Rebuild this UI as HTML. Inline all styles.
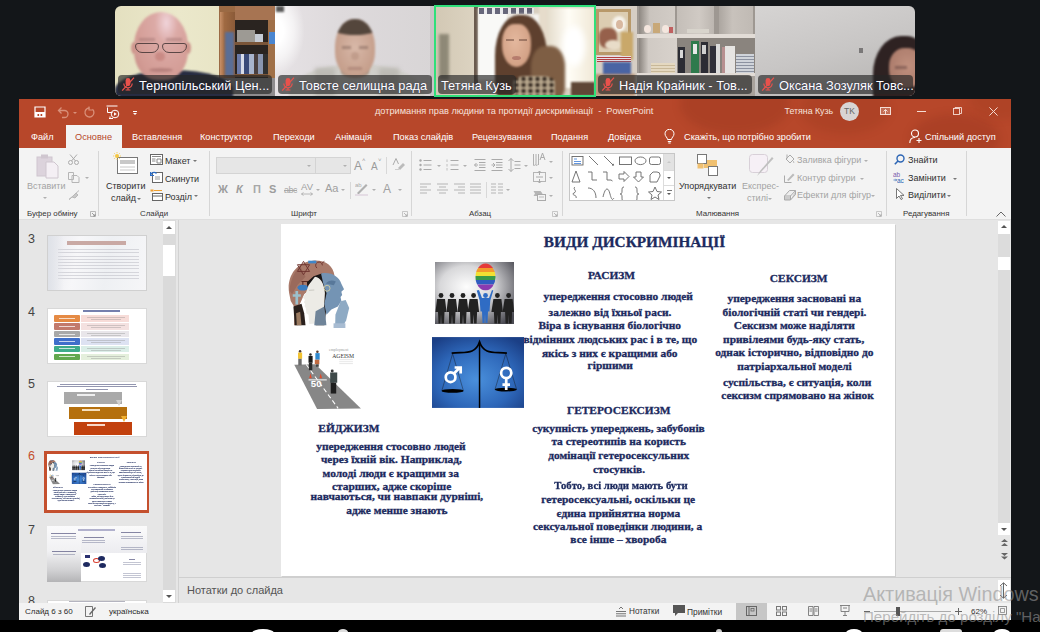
<!DOCTYPE html>
<html><head><meta charset="utf-8">
<style>
*{margin:0;padding:0;box-sizing:border-box}
html,body{width:1040px;height:632px;overflow:hidden;background:#131619;font-family:"Liberation Sans",sans-serif;position:relative}
.a{position:absolute}
.t{position:absolute;white-space:nowrap;line-height:1}
.blur{filter:blur(2px)}
.tile{position:absolute;top:6px;height:90px;width:160px;overflow:hidden}
.lbl{position:absolute;top:74.5px;height:19px;border-radius:4px;background:rgba(38,38,38,.66)}
.lt{position:absolute;top:79.5px;color:#fff;font-size:12.8px;white-space:nowrap;line-height:1;text-shadow:0 0 1px rgba(0,0,80,.6)}
.mic{position:absolute;top:77px;width:14px;height:14px}
/* window */
.tab{position:absolute;top:133px;font-size:9.2px;color:#fff;white-space:nowrap;line-height:1}
.rt{position:absolute;font-size:9px;color:#303030;white-space:nowrap;line-height:1}
.rd{position:absolute;font-size:9px;color:#a3a3a3;white-space:nowrap;line-height:1}
.gl{position:absolute;top:210px;font-size:7.9px;color:#333;white-space:nowrap;line-height:1}
.sep{position:absolute;top:151px;width:1px;height:65px;background:#d6d6d6}
.dd{position:absolute;width:0;height:0;border-left:2px solid transparent;border-right:2px solid transparent;border-top:2px solid #777}
.ddg{position:absolute;width:0;height:0;border-left:2px solid transparent;border-right:2px solid transparent;border-top:2px solid #b0b0b0}
.st{position:absolute;font-family:"Liberation Serif",serif;font-weight:bold;color:#1c2a5e;white-space:nowrap;line-height:1;font-size:11.4px;-webkit-text-stroke:.3px #1c2a5e}
</style></head><body>

<!-- ================= VIDEO STRIP ================= -->
<!-- tile 1 -->
<div class="tile" style="left:115px;border-radius:6px 0 0 6px;background:linear-gradient(90deg,#e4e0c0,#ebe8cb 40%,#e6e2c2 90%,#d8d2b0)">
  <div class="a" style="left:104px;top:0;width:56px;height:90px;background:#9b6a44"></div>
  <div class="a" style="left:105px;top:6px;width:15px;height:66px;background:linear-gradient(90deg,#c89068,#a06a42 30%,#8a5a38);filter:blur(.5px)"></div>
  <div class="a" style="left:110px;top:26px;width:9px;height:44px;background:#5a6e96;filter:blur(.8px)"></div>
  <div class="a" style="left:120px;top:0;width:40px;height:14px;background:#a77452"></div>
  <div class="a" style="left:120px;top:14px;width:36px;height:58px;background:#2a2420;filter:blur(.5px)"></div>
  <div class="a" style="left:122px;top:24px;width:18px;height:12px;background:#9d9a94;filter:blur(.7px)"></div>
  <div class="a" style="left:140px;top:28px;width:8px;height:8px;background:#c6ccd4;filter:blur(.7px)"></div>
  <div class="a" style="left:120px;top:36px;width:36px;height:3px;background:#7a5538"></div>
  <div class="a" style="left:122px;top:48px;width:32px;height:20px;background:linear-gradient(90deg,#6a7aa8 0 12%,#d8dce8 12% 22%,#3a4a78 22% 38%,#a8b4cc 38% 52%,#4a4040 52% 66%,#8a96b0 66% 80%,#303030 80%);filter:blur(.6px)"></div>
  <div class="a" style="left:120px;top:68px;width:36px;height:3px;background:#7a5538"></div>
  <div class="a" style="left:153px;top:14px;width:7px;height:60px;background:#a07048"></div>
  <div class="a" style="left:154px;top:26px;width:6px;height:12px;background:#4a86d0;filter:blur(.6px)"></div>
  <div class="a" style="left:104px;top:72px;width:56px;height:18px;background:#8e8c8e;filter:blur(.6px)"></div>
  <div class="a" style="left:0;top:64px;width:118px;height:40px;border-radius:50% 50% 0 0;background:#272c42;filter:blur(1.2px)"></div>
  <div class="a" style="left:19px;top:6px;width:54px;height:68px;border-radius:50% 50% 42% 42%;background:radial-gradient(ellipse at 60% 16%,#f0d4da 0,#dcaaa6 25%,#d39c95 70%,#c48a84 100%);filter:blur(1px)"></div>
  <div class="a" style="left:16px;top:36px;width:6px;height:12px;border-radius:50%;background:#cf968e;filter:blur(.8px)"></div>
  <div class="a" style="left:70px;top:36px;width:6px;height:12px;border-radius:50%;background:#cf968e;filter:blur(.8px)"></div>
  <div class="a" style="left:20px;top:37px;width:24px;height:10px;border:1.8px solid #3c3030;border-radius:3px 3px 7px 7px;opacity:.8;filter:blur(.4px)"></div>
  <div class="a" style="left:47px;top:37px;width:25px;height:10px;border:1.8px solid #3c3030;border-radius:3px 3px 7px 7px;opacity:.8;filter:blur(.4px)"></div>
  <div class="a" style="left:24px;top:32px;width:16px;height:3px;background:#8a6060;opacity:.35;filter:blur(.8px)"></div>
  <div class="a" style="left:51px;top:32px;width:16px;height:3px;background:#8a6060;opacity:.35;filter:blur(.8px)"></div>
  <div class="a" style="left:40px;top:46px;width:10px;height:9px;border-radius:50%;background:#c07a74;opacity:.6;filter:blur(1px)"></div>
  <div class="a" style="left:34px;top:62px;width:24px;height:4px;border-radius:50%;background:#9a6462;opacity:.5;filter:blur(.8px)"></div>
</div>
<!-- tile 2 -->
<div class="tile" style="left:275px;background:linear-gradient(90deg,#e6e2e5,#dedadc 40%,#d8d5d6)">
  <div class="a" style="left:-30px;top:-20px;width:60px;height:90px;border-radius:50%;background:radial-gradient(#ffffff 20%,rgba(255,255,255,.6) 45%,rgba(255,255,255,0) 70%)"></div>
  <div class="a" style="left:1px;top:0;width:8px;height:6px;background:#555;filter:blur(.8px)"></div>
  <div class="a" style="left:155px;top:0;width:5px;height:90px;background:#c8c4c6"></div>
  <div class="a" style="left:14px;top:58px;width:136px;height:60px;border-radius:50% 50% 0 0;background:#d0cfca;filter:blur(1.2px)"></div>
  <div class="a" style="left:40px;top:62px;width:20px;height:30px;background:#bcbab4;filter:blur(2px)"></div>
  <div class="a" style="left:104px;top:62px;width:20px;height:30px;background:#bcbab4;filter:blur(2px)"></div>
  <div class="a" style="left:66px;top:60px;width:28px;height:12px;border-radius:0 0 50% 50%;background:#b09888;filter:blur(1.2px)"></div>
  <div class="a" style="left:60px;top:13px;width:40px;height:57px;border-radius:48% 48% 42% 42%;overflow:hidden;background:radial-gradient(ellipse at 50% 50%,#d8b8a8,#c29a86 85%);filter:blur(1px)"><div class="a" style="left:-4px;top:-6px;width:48px;height:22px;border-radius:0 0 50% 50%/0 0 30% 30%;background:#54463c"></div></div>
  <div class="a" style="left:67px;top:40px;width:9px;height:3px;background:#6a5048;opacity:.4;filter:blur(.8px)"></div>
  <div class="a" style="left:84px;top:40px;width:9px;height:3px;background:#6a5048;opacity:.4;filter:blur(.8px)"></div>
  <div class="a" style="left:76px;top:46px;width:8px;height:8px;border-radius:50%;background:#b08a78;opacity:.5;filter:blur(1px)"></div>
  <div class="a" style="left:73px;top:61px;width:14px;height:3px;background:#8a6058;opacity:.35;filter:blur(.8px)"></div>
</div>
<!-- tile 3 -->
<div class="tile" style="left:435px;background:#d8cfc0">
  <div class="a" style="left:0;top:0;width:42px;height:90px;background:linear-gradient(90deg,#d2c8b4,#ddd4c2);filter:blur(.5px)"></div>
  <div class="a" style="left:4px;top:28px;width:10px;height:46px;background:#3a3a2a;opacity:.45;filter:blur(1.5px)"></div>
  <div class="a" style="left:39px;top:0;width:4px;height:78px;background:#6a5a4e;filter:blur(.6px)"></div>
  <div class="a" style="left:43px;top:2px;width:30px;height:72px;background:#f9f9f7;filter:blur(.8px)"></div>
  <div class="a" style="left:44px;top:2px;width:55px;height:6px;background:repeating-linear-gradient(90deg,#4e4e66 0 5px,#e8e8ec 5px 8px);opacity:.85;filter:blur(.5px)"></div>
  <div class="a" style="left:73px;top:8px;width:34px;height:60px;background:#f4f2ee;filter:blur(.8px)"></div>
  <div class="a" style="left:104px;top:0;width:10px;height:80px;background:#e6dccb;filter:blur(1px)"></div>
  <div class="a" style="left:112px;top:2px;width:48px;height:80px;background:linear-gradient(90deg,#e4dccb,#fffdf6 45%,#f0e8d6);filter:blur(1px)"></div>
  <div class="a" style="left:128px;top:20px;width:22px;height:40px;border-radius:50%;background:#ffffff;filter:blur(3px)"></div>
  <div class="a" style="left:136px;top:76px;width:24px;height:14px;background:#5e4636;filter:blur(1px)"></div>
  <div class="a" style="left:60px;top:9px;width:52px;height:90px;border-radius:45% 45% 25% 25%;background:#5e402e;filter:blur(1.2px)"></div>
  <div class="a" style="left:96px;top:40px;width:34px;height:52px;border-radius:40% 40% 20% 20%;background:#7e5e44;filter:blur(1.5px)"></div>
  <div class="a" style="left:67px;top:18px;width:29px;height:43px;border-radius:42% 42% 50% 50%;background:radial-gradient(ellipse at 45% 40%,#e4b89e,#cf9c80 85%);filter:blur(1px)"></div>
  <div class="a" style="left:71px;top:33px;width:8px;height:2px;background:#5a3a30;opacity:.45;filter:blur(.7px)"></div>
  <div class="a" style="left:84px;top:33px;width:8px;height:2px;background:#5a3a30;opacity:.45;filter:blur(.7px)"></div>
  <div class="a" style="left:77px;top:50px;width:9px;height:4px;border-radius:50%;background:#a86a60;opacity:.7;filter:blur(.6px)"></div>
  <div class="a" style="left:78px;top:70px;width:42px;height:22px;border-radius:30% 30% 0 0;background-color:#b9a88e;background-image:radial-gradient(circle at 50% 50%,#2a2018 1.6px,rgba(0,0,0,0) 2.6px);background-size:7px 6px;filter:blur(1px)"></div>
</div>
<!-- tile 4 -->
<div class="tile" style="left:595px;background:#b4aea8">
  <div class="a" style="left:0;top:0;width:42px;height:90px;background:#d6cec4"></div>
  <div class="a" style="left:1px;top:3px;width:35px;height:46px;background:#b8996a;filter:blur(.5px)"></div>
  <div class="a" style="left:4px;top:6px;width:29px;height:40px;background:#dccdb2;filter:blur(.6px)"></div>
  <div class="a" style="left:17px;top:10px;width:14px;height:16px;border-radius:50%;background:#f6f2ea;filter:blur(.8px)"></div>
  <div class="a" style="left:21px;top:14px;width:7px;height:9px;border-radius:50%;background:#d8b8a0;filter:blur(.6px)"></div>
  <div class="a" style="left:4px;top:22px;width:18px;height:20px;border-radius:40%;background:#8a4e3a;opacity:.85;filter:blur(1px)"></div>
  <div class="a" style="left:10px;top:34px;width:16px;height:10px;border-radius:50%;background:#e8dcc8;filter:blur(.8px)"></div>
  <div class="a" style="left:26px;top:26px;width:12px;height:28px;background:#c9a86a;filter:blur(1px)"></div>
  <div class="a" style="left:2px;top:50px;width:34px;height:6px;background:repeating-linear-gradient(#e8e0e8 0 1px,#b04040 1px 2px);filter:blur(.5px)"></div>
  <div class="a" style="left:8px;top:56px;width:28px;height:16px;background:#4a64a4;filter:blur(.8px)"></div>
  <div class="a" style="left:0;top:68px;width:40px;height:22px;background:#b89478;filter:blur(.8px)"></div>
  <div class="a" style="left:42px;top:0;width:118px;height:90px;background:#9e9892"></div>
  <div class="a" style="left:44px;top:0;width:36px;height:28px;background:linear-gradient(90deg,#8e8882,#cac4be 30%,#d2ccc6)"></div>
  <div class="a" style="left:82px;top:0;width:37px;height:28px;background:linear-gradient(90deg,#c4beb8,#d0cac4 60%,#bcb6b0)"></div>
  <div class="a" style="left:124px;top:0;width:34px;height:28px;background:linear-gradient(90deg,#aca6a0,#c8c2bc 40%,#c0bab4)"></div>
  <div class="a" style="left:49px;top:19px;width:7px;height:8px;border-radius:50%;background:#f4e6de;filter:blur(.5px)"></div>
  <div class="a" style="left:58px;top:17px;width:7px;height:10px;background:#c8a878;filter:blur(.6px)"></div>
  <div class="a" style="left:67px;top:19px;width:7px;height:8px;border-radius:50%;background:#f4e6de;filter:blur(.5px)"></div>
  <div class="a" style="left:74px;top:21px;width:4px;height:6px;background:#c06060;filter:blur(.5px)"></div>
  <div class="a" style="left:92px;top:23px;width:22px;height:4px;background:#d8d4cc;filter:blur(.5px)"></div>
  <div class="a" style="left:42px;top:28px;width:118px;height:4px;background:#e2dcd6"></div>
  <div class="a" style="left:44px;top:32px;width:38px;height:35px;background:linear-gradient(90deg,#8a847e,#d0cac4 25%,#d8d2cc)"></div>
  <div class="a" style="left:56px;top:57px;width:24px;height:10px;background:repeating-linear-gradient(#e4d8c0 0 2px,#c8b898 2px 3px);filter:blur(.5px)"></div>
  <div class="a" style="left:82px;top:32px;width:78px;height:35px;background:#8a847e"></div>
  <div class="a" style="left:83px;top:41px;width:7px;height:26px;background:#2c2c34;filter:blur(.4px)"></div>
  <div class="a" style="left:85px;top:44px;width:3px;height:8px;background:#d8d8d8;filter:blur(.4px)"></div>
  <div class="a" style="left:96px;top:35px;width:8px;height:32px;background:#2e7a4c;filter:blur(.4px)"></div>
  <div class="a" style="left:98px;top:38px;width:4px;height:10px;background:#e8e8e8;filter:blur(.4px)"></div>
  <div class="a" style="left:106px;top:36px;width:7px;height:31px;background:#2c2c34;filter:blur(.4px)"></div>
  <div class="a" style="left:107px;top:39px;width:4px;height:9px;background:#d0d0d0;filter:blur(.4px)"></div>
  <div class="a" style="left:115px;top:40px;width:6px;height:27px;background:#30303a;filter:blur(.4px)"></div>
  <div class="a" style="left:121px;top:38px;width:4px;height:29px;background:#dcdcdc;filter:blur(.4px)"></div>
  <div class="a" style="left:127px;top:41px;width:3px;height:26px;background:#b89090;filter:blur(.4px)"></div>
  <div class="a" style="left:130px;top:40px;width:10px;height:27px;background:#e6e4e2;filter:blur(.5px)"></div>
  <div class="a" style="left:141px;top:48px;width:18px;height:19px;background:repeating-linear-gradient(#d0d4da 0 2px,#8c92a0 2px 3px);filter:blur(.5px)"></div>
  <div class="a" style="left:42px;top:67px;width:118px;height:3px;background:#e2dcd6"></div>
  <div class="a" style="left:42px;top:70px;width:118px;height:20px;background:#a8a29c"></div>
</div>
<!-- tile 5 -->
<div class="tile" style="left:755px;border-radius:0 6px 6px 0;background:linear-gradient(165deg,#d6d4d3,#c8c6c5 50%,#b4b2b0)">
  <div class="a" style="left:104px;top:42px;width:4px;height:5px;background:#7a7878;filter:blur(.6px)"></div>
  <div class="a" style="left:118px;top:30px;width:56px;height:76px;border-radius:50% 40% 0 0;background:#2e2222;filter:blur(1.2px)"></div>
  <div class="a" style="left:134px;top:42px;width:34px;height:40px;border-radius:45%;background:radial-gradient(ellipse at 55% 45%,#c0907e,#a87868 85%);filter:blur(1px)"></div>
  <div class="a" style="left:140px;top:60px;width:12px;height:3px;background:#4a3030;opacity:.4;filter:blur(.8px)"></div>
</div>
<!-- active speaker border -->
<div class="a" style="left:434px;top:5px;width:162px;height:92px;border:2px solid #2fe07a"></div>

<!-- labels -->
<div class="lbl" style="left:118px;width:154px"></div>
<svg class="mic" style="left:120.5px" viewBox="0 0 14 14"><rect x="4.6" y="1" width="4.8" height="8.2" rx="2.4" fill="#e8524c"/><path d="M2.8 6.6a4.2 4.2 0 0 0 8.4 0M7 10.8v1.8M4.6 13h4.8" fill="none" stroke="#e8524c" stroke-width="1.2"/><path d="M13 0.6L1.2 13.6" stroke="#e8524c" stroke-width="1.3"/></svg>
<div class="lt" style="left:139px">Тернопільський Цен...</div>

<div class="lbl" style="left:278px;width:154px"></div>
<svg class="mic" style="left:280.5px" viewBox="0 0 14 14"><rect x="4.6" y="1" width="4.8" height="8.2" rx="2.4" fill="#e8524c"/><path d="M2.8 6.6a4.2 4.2 0 0 0 8.4 0M7 10.8v1.8M4.6 13h4.8" fill="none" stroke="#e8524c" stroke-width="1.2"/><path d="M13 0.6L1.2 13.6" stroke="#e8524c" stroke-width="1.3"/></svg>
<div class="lt" style="left:299px">Товсте селищна рада</div>

<div class="lbl" style="left:438px;width:78px"></div>
<div class="lt" style="left:441px">Тетяна Кузь</div>

<div class="lbl" style="left:598px;width:154px"></div>
<svg class="mic" style="left:600.5px" viewBox="0 0 14 14"><rect x="4.6" y="1" width="4.8" height="8.2" rx="2.4" fill="#e8524c"/><path d="M2.8 6.6a4.2 4.2 0 0 0 8.4 0M7 10.8v1.8M4.6 13h4.8" fill="none" stroke="#e8524c" stroke-width="1.2"/><path d="M13 0.6L1.2 13.6" stroke="#e8524c" stroke-width="1.3"/></svg>
<div class="lt" style="left:619px">Надія Крайник - Тов...</div>

<div class="lbl" style="left:758px;width:155px"></div>
<svg class="mic" style="left:760.5px" viewBox="0 0 14 14"><rect x="4.6" y="1" width="4.8" height="8.2" rx="2.4" fill="#e8524c"/><path d="M2.8 6.6a4.2 4.2 0 0 0 8.4 0M7 10.8v1.8M4.6 13h4.8" fill="none" stroke="#e8524c" stroke-width="1.2"/><path d="M13 0.6L1.2 13.6" stroke="#e8524c" stroke-width="1.3"/></svg>
<div class="lt" style="left:779px">Оксана Зозуляк Товс...</div>

<!-- ================= POWERPOINT WINDOW ================= -->
<div class="a" style="left:19px;top:99px;width:992px;height:521px;background:#e6e6e6"></div>
<!-- title + tabs -->
<div class="a" style="left:19px;top:99px;width:992px;height:49px;background:#b7472a"></div>
<!-- title bar decorations (subtle darker blobs) -->
<div class="a" style="left:600px;top:99px;width:411px;height:49px;overflow:hidden">
  <div class="a" style="left:80px;top:-25px;width:110px;height:60px;border-radius:50%;background:rgba(90,20,5,.13);filter:blur(4px)"></div>
  <div class="a" style="left:200px;top:-15px;width:90px;height:50px;border-radius:50%;background:rgba(90,20,5,.09);filter:blur(4px)"></div>
  <div class="a" style="left:310px;top:15px;width:90px;height:50px;border-radius:50%;background:rgba(90,20,5,.12);filter:blur(4px)"></div>
  <div class="a" style="left:370px;top:-20px;width:60px;height:40px;border-radius:50%;background:rgba(90,20,5,.08);filter:blur(4px)"></div>
</div>
<!-- QAT icons -->
<svg class="a" style="left:34px;top:106px" width="12" height="12" viewBox="0 0 12 12"><path d="M1 1h10v10H1z" fill="none" stroke="#fff" stroke-width="1.2"/><rect x="1" y="6" width="10" height="5" fill="#fff"/><rect x="3.5" y="8" width="1.6" height="2" fill="#b7472a"/><rect x="6.6" y="8" width="1.6" height="2" fill="#b7472a"/></svg>
<svg class="a" style="left:56px;top:106px" width="14" height="13" viewBox="0 0 14 13"><path d="M3 4.5h5.5a3.5 3.5 0 0 1 0 7H6 M5.5 1.5L2.5 4.5l3 3" fill="none" stroke="#d9907a" stroke-width="1.3"/></svg>
<div class="dd" style="left:73px;top:112px;border-top-color:#d9907a"></div>
<svg class="a" style="left:83px;top:106px" width="13" height="13" viewBox="0 0 13 13"><path d="M9.5 3.2A4.5 4.5 0 1 1 6.5 2" fill="none" stroke="#d9907a" stroke-width="1.3"/><path d="M6 0.5v3.5h3.5" fill="none" stroke="#d9907a" stroke-width="1.2"/></svg>
<svg class="a" style="left:106px;top:105px" width="14" height="15" viewBox="0 0 14 15"><path d="M0.5 1h11" stroke="#fff" stroke-width="1"/><path d="M1.5 2.5v5h5" fill="none" stroke="#fff" stroke-width="1"/><circle cx="9" cy="9" r="3.8" fill="none" stroke="#fff" stroke-width="1"/><path d="M8 7.2v3.6l2.8-1.8z" fill="#fff"/><path d="M3 13.5h4 M4 11.5v2" stroke="#fff" stroke-width="1"/></svg>
<div class="a" style="left:133px;top:111px;width:4px;height:1px;background:#fff"></div>
<div class="dd" style="left:133px;top:113px;border-top-color:#fff"></div>

<div class="t" style="left:375px;top:107px;font-size:9.2px;color:#f7e2dc">дотримання прав людини та протидії дискримінації&nbsp; -&nbsp; PowerPoint</div>
<div class="t" style="left:784.5px;top:107px;font-size:8.8px;color:#f7e2dc">Тетяна Кузь</div>
<div class="a" style="left:840px;top:102px;width:19px;height:19px;border-radius:50%;background:#d8d4d4;color:#666;font-size:8.5px;line-height:19px;text-align:center">TK</div>
<svg class="a" style="left:880px;top:107px" width="11" height="8" viewBox="0 0 11 8"><rect x="0.5" y="0.5" width="10" height="7" fill="rgba(255,230,220,.25)" stroke="#f5ddd5" stroke-width="1"/><path d="M5.5 7V2.5 M3.5 4.5l2-2 2 2" fill="none" stroke="#f5ddd5" stroke-width="1"/></svg>
<div class="a" style="left:917px;top:111px;width:9px;height:1px;background:#f5ddd5"></div>
<svg class="a" style="left:953px;top:107px" width="9" height="8" viewBox="0 0 9 8"><rect x="0.5" y="1.5" width="6" height="6" fill="none" stroke="#f5ddd5" stroke-width=".9"/><path d="M2 1.5V0.5h6.5v6h-2" fill="none" stroke="#f5ddd5" stroke-width=".9"/></svg>
<svg class="a" style="left:989px;top:107px" width="9" height="9" viewBox="0 0 10 10"><path d="M0.5 0.5l9 9M9.5 0.5l-9 9" stroke="#f5ddd5" stroke-width="1.1"/></svg>

<!-- tabs -->
<div class="a" style="left:66px;top:125px;width:56px;height:24px;background:#f3f3f3"></div>
<div class="tab" style="left:31px">Файл</div>
<div class="tab" style="left:75px;color:#b7472a">Основне</div>
<div class="tab" style="left:132px">Вставлення</div>
<div class="tab" style="left:200px">Конструктор</div>
<div class="tab" style="left:273px">Переходи</div>
<div class="tab" style="left:335px">Анімація</div>
<div class="tab" style="left:393px">Показ слайдів</div>
<div class="tab" style="left:472px">Рецензування</div>
<div class="tab" style="left:551px">Подання</div>
<div class="tab" style="left:608px">Довідка</div>
<svg class="a" style="left:664px;top:129px" width="11" height="15" viewBox="0 0 11 15"><path d="M3.5 10.5C3.5 8.5 1 7.5 1 4.8A4.5 4.5 0 0 1 10 4.8C10 7.5 7.5 8.5 7.5 10.5z M3.8 12.5h3.4 M4.3 14h2.4" fill="none" stroke="#fff" stroke-width="1"/></svg>
<div class="tab" style="left:684px">Скажіть, що потрібно зробити</div>
<svg class="a" style="left:909px;top:129px" width="14" height="15" viewBox="0 0 14 15"><circle cx="6" cy="4.5" r="3.5" fill="none" stroke="#fff" stroke-width="1.1"/><path d="M0.8 14c0-3.5 2-5.5 5.2-5.5 M10 9v5 M7.5 11.5h5" fill="none" stroke="#fff" stroke-width="1.1"/></svg>
<div class="tab" style="left:925px">Спільний доступ</div>

<!-- ribbon -->
<div class="a" style="left:19px;top:148px;width:992px;height:71px;background:#f3f3f3"></div><div class="a" style="left:19px;top:219px;width:992px;height:1px;background:#dedede"></div>
<!-- Clipboard group -->
<svg class="a" style="left:36px;top:153px" width="24" height="26" viewBox="0 0 24 26"><rect x="1" y="4" width="15" height="19" fill="#dcd3dc" stroke="#cfc6cf"/><rect x="5" y="1.5" width="7" height="4" fill="#cfc6cf"/><path d="M10 9h8l4 4v12H10z" fill="#f4eff4" stroke="#cfc6cf"/></svg>
<div class="rd" style="left:27px;top:182px">Вставити</div>
<div class="ddg" style="left:43px;top:197px"></div>
<svg class="a" style="left:68px;top:154px" width="11" height="11" viewBox="0 0 11 11"><circle cx="2.5" cy="8.5" r="2" fill="none" stroke="#aaa"/><circle cx="8.5" cy="8.5" r="2" fill="none" stroke="#aaa"/><path d="M3.5 7L9 0.5M7.5 7L2 0.5" stroke="#aaa"/></svg>
<svg class="a" style="left:68px;top:172px" width="12" height="11" viewBox="0 0 12 11"><path d="M0.5 0.5h5v7h-5z M4 3.5h5l2 2v5H4z" fill="#f3f3f3" stroke="#b5b5b5"/></svg>
<div class="ddg" style="left:85px;top:177px"></div>
<svg class="a" style="left:68px;top:190px" width="12" height="10" viewBox="0 0 12 10"><path d="M6 5l5-4.5M1 9.5l3-2.5 3 1 3-3-2-2-3 3z" fill="#c8c8c8" stroke="#b8b8b8"/></svg>
<div class="gl" style="left:27px">Буфер обміну</div>
<svg class="a" style="left:90px;top:211px" width="6" height="6" viewBox="0 0 6 6"><path d="M0.5 0.5h5v5h-5z" fill="none" stroke="#aaa" stroke-width=".8"/><path d="M2 2l3 3M3 5h2V3" fill="none" stroke="#888" stroke-width=".8"/></svg>
<div class="sep" style="left:98px"></div>

<!-- Slides group -->
<svg class="a" style="left:113px;top:152px" width="26" height="23" viewBox="0 0 26 23"><rect x="4.5" y="5.5" width="20" height="16" fill="#fff" stroke="#777"/><rect x="7" y="8" width="15" height="4" fill="#c8c8c8"/><path d="M7 15h15M7 18h15" stroke="#c8c8c8"/><circle cx="4" cy="4" r="2" fill="#f5c842"/><path d="M4 0v1.2M4 6.8V8M0 4h1.2M6.8 4H8M1.2 1.2l.9.9M5.9 5.9l.9.9M1.2 6.8l.9-.9M5.9 2.1l.9-.9" stroke="#f5c842" stroke-width=".8"/></svg>
<div class="rt" style="left:106px;top:182px">Створити</div>
<div class="rt" style="left:111px;top:194px">слайд</div>
<div class="dd" style="left:137px;top:198px"></div>
<svg class="a" style="left:150px;top:154px" width="13" height="11" viewBox="0 0 13 11"><rect x="0.5" y="0.5" width="12" height="10" fill="#fff" stroke="#666"/><path d="M2 2.5h9M2 5h3.5M2 7h3.5M7 5h4v4H7z" fill="none" stroke="#888"/></svg>
<div class="rt" style="left:165px;top:157px">Макет</div>
<div class="dd" style="left:193px;top:160px"></div>
<svg class="a" style="left:150px;top:171px" width="13" height="12" viewBox="0 0 13 12"><rect x="2.5" y="1.5" width="10" height="10" fill="#fff" stroke="#666"/><path d="M5 6h5M5 8h5" stroke="#999"/><path d="M0.5 4.5a3.5 3.5 0 0 1 6-2" fill="none" stroke="#2b6cc4" stroke-width="1.2"/><path d="M0.5 1v3.5H4" fill="none" stroke="#2b6cc4" stroke-width="1.1"/></svg>
<div class="rt" style="left:165px;top:174.5px">Скинути</div>
<svg class="a" style="left:150px;top:189px" width="13" height="12" viewBox="0 0 13 12"><rect x="0.5" y="0.5" width="3" height="2" fill="#f0a030"/><path d="M4 1.5h8" stroke="#f0a030"/><rect x="2.5" y="4.5" width="10" height="7" fill="#fff" stroke="#666"/><path d="M2.5 7h10" stroke="#666"/></svg>
<div class="rt" style="left:165px;top:192.5px">Розділ</div>
<div class="dd" style="left:194px;top:195px"></div>
<div class="gl" style="left:140px">Слайди</div>
<div class="sep" style="left:209px"></div>

<!-- Font group -->
<div class="a" style="left:216px;top:157px;width:135px;height:17px;background:#e6e6e6;border:1px solid #d4d4d4"></div>
<div class="a" style="left:315px;top:157px;width:1px;height:17px;background:#d4d4d4"></div>
<div class="ddg" style="left:307px;top:165px"></div>
<div class="ddg" style="left:343px;top:165px"></div>
<div class="t" style="left:354px;top:160px;font-size:12px;color:#9a9a9a">A</div>
<div class="t" style="left:362px;top:157px;font-size:6px;color:#9a9a9a">˄</div>
<div class="t" style="left:371px;top:162px;font-size:10px;color:#9a9a9a">A</div>
<div class="t" style="left:378px;top:157px;font-size:6px;color:#9a9a9a">˅</div>
<div class="a" style="left:386px;top:157px;width:1px;height:17px;background:#d8d8d8"></div>
<svg class="a" style="left:392px;top:158px" width="13" height="12" viewBox="0 0 13 12"><path d="M1 7l3-6.5L6.5 6" fill="none" stroke="#aaa"/><path d="M6 10l5-5 2 2-5 5z" fill="#bbb"/><path d="M3 11.5h4" stroke="#ccc"/></svg>
<div class="t" style="left:218px;top:184px;font-size:11px;font-weight:bold;color:#9d9d9d">Ж</div>
<div class="t" style="left:236px;top:184px;font-size:11px;font-weight:bold;font-style:italic;color:#9d9d9d">К</div>
<div class="t" style="left:253px;top:184px;font-size:11px;font-weight:bold;color:#a8a8a8">П</div>
<div class="t" style="left:269px;top:184px;font-size:11px;font-weight:bold;color:#9d9d9d">S</div>
<div class="t" style="left:284px;top:186px;font-size:9px;color:#a8a8a8;letter-spacing:-.5px">abc</div>
<div class="a" style="left:284px;top:190px;width:13px;height:1px;background:#a8a8a8"></div>
<div class="t" style="left:301px;top:182px;font-size:9.5px;color:#a0a0a0">AV</div>
<svg class="a" style="left:301px;top:192px" width="12" height="4" viewBox="0 0 12 4"><path d="M0.5 2h11M2.5 0.5L0.5 2l2 1.5M9.5 0.5l2 1.5-2 1.5" fill="none" stroke="#a8a8a8" stroke-width=".8"/></svg>
<div class="ddg" style="left:316px;top:189px"></div>
<div class="t" style="left:325px;top:183px;font-size:11px;color:#a0a0a0">Aa</div>
<div class="ddg" style="left:341px;top:189px"></div>
<div class="a" style="left:350px;top:182px;width:1px;height:17px;background:#d8d8d8"></div>
<svg class="a" style="left:355px;top:181px" width="13" height="15" viewBox="0 0 13 15"><text x="0" y="6" font-size="6" fill="#aaa" font-family="Liberation Sans">ab</text><path d="M2 12l9-9 1.5 1.5-9 9z" fill="#b0b0b0"/><rect x="0" y="13" width="13" height="2" fill="#e4dce4"/></svg>
<div class="ddg" style="left:372px;top:189px"></div>
<div class="t" style="left:383px;top:183px;font-size:12px;color:#a0a0a0">A</div>
<div class="ddg" style="left:398px;top:189px"></div>
<div class="gl" style="left:291px">Шрифт</div>
<svg class="a" style="left:402px;top:211px" width="6" height="6" viewBox="0 0 6 6"><path d="M0.5 0.5h5v5h-5z" fill="none" stroke="#bbb" stroke-width=".8"/><path d="M2 2l3 3M3 5h2V3" fill="none" stroke="#aaa" stroke-width=".8"/></svg>
<div class="sep" style="left:411px"></div>

<!-- Paragraph group -->
<svg class="a" style="left:419px;top:159px" width="13" height="12" viewBox="0 0 13 12"><circle cx="1.5" cy="1.5" r="1.2" fill="#aaa"/><circle cx="1.5" cy="6" r="1.2" fill="#aaa"/><circle cx="1.5" cy="10.5" r="1.2" fill="#aaa"/><path d="M4.5 1.5h8M4.5 6h8M4.5 10.5h8" stroke="#aaa"/></svg>
<div class="ddg" style="left:437px;top:165px"></div>
<svg class="a" style="left:446px;top:159px" width="13" height="12" viewBox="0 0 13 12"><path d="M1 0.5v2.5M1 5v2.5M1 9v2.5" stroke="#bbb" stroke-width=".9"/><path d="M4.5 1.5h8M4.5 6h8M4.5 10.5h8" stroke="#aaa"/></svg>
<div class="ddg" style="left:463px;top:165px"></div>
<svg class="a" style="left:474px;top:159px" width="12" height="12" viewBox="0 0 12 12"><path d="M0.5 0.5h11M5 3.5h6.5M5 6h6.5M5 8.5h6.5M0.5 11.5h11M4 6H0.5M2.5 4L0.5 6l2 2" fill="none" stroke="#aaa"/></svg>
<svg class="a" style="left:491px;top:159px" width="12" height="12" viewBox="0 0 12 12"><path d="M0.5 0.5h11M5 3.5h6.5M5 6h6.5M5 8.5h6.5M0.5 11.5h11M0.5 6H4M2 4l2 2-2 2" fill="none" stroke="#aaa"/></svg>
<svg class="a" style="left:508px;top:158px" width="13" height="14" viewBox="0 0 13 14"><path d="M3 0.5v13M0.5 3L3 0.5 5.5 3M0.5 11L3 13.5 5.5 11M6.5 3.5h6M6.5 7h6M6.5 10.5h6" fill="none" stroke="#aaa"/></svg>
<div class="ddg" style="left:524px;top:165px"></div>
<svg class="a" style="left:533px;top:152px" width="13" height="14" viewBox="0 0 13 14"><path d="M0.5 2v11M3 2v11M5.5 2v11" stroke="#b0b0b0"/><path d="M7 8l2.5-7L12 8M8 5.5h3" fill="none" stroke="#aaa"/><path d="M0 12.5l1 1.5 1-1.5M2.5 12.5l1 1.5 1-1.5" fill="none" stroke="#aaa" stroke-width=".7"/></svg>
<div class="ddg" style="left:549px;top:161px"></div>
<svg class="a" style="left:533px;top:171px" width="13" height="12" viewBox="0 0 13 12"><rect x="0.5" y="1.5" width="12" height="9" fill="none" stroke="#b5b5b5"/><path d="M6.5 0v4M4.5 2l2-2 2 2M6.5 12V8M4.5 10l2 2 2-2M3 6h7" fill="none" stroke="#aaa"/></svg>
<div class="ddg" style="left:549px;top:177px"></div>
<svg class="a" style="left:533px;top:190px" width="13" height="11" viewBox="0 0 13 11"><path d="M0.5 1h7l2 2.5-2 2.5h-7l1.5-2.5z" fill="#b5b5b5"/><rect x="4.5" y="4.5" width="8" height="6" fill="#f3f3f3" stroke="#aaa"/><path d="M6 7h5" stroke="#bbb"/></svg>
<div class="ddg" style="left:549px;top:195px"></div>
<svg class="a" style="left:420px;top:183px" width="11" height="12" viewBox="0 0 11 12"><path d="M0 1h11M0 4h7M0 7h11M0 10h7" stroke="#b5b5b5"/></svg>
<svg class="a" style="left:437px;top:183px" width="11" height="12" viewBox="0 0 11 12"><path d="M0 1h11M2 4h7M0 7h11M2 10h7" stroke="#b5b5b5"/></svg>
<svg class="a" style="left:454px;top:183px" width="11" height="12" viewBox="0 0 11 12"><path d="M0 1h11M4 4h7M0 7h11M4 10h7" stroke="#b5b5b5"/></svg>
<svg class="a" style="left:470px;top:183px" width="11" height="12" viewBox="0 0 11 12"><path d="M0 1h11M0 4h11M0 7h11M0 10h11" stroke="#b5b5b5"/></svg>
<div class="a" style="left:486px;top:182px;width:1px;height:16px;background:#d8d8d8"></div>
<svg class="a" style="left:491px;top:183px" width="12" height="12" viewBox="0 0 12 12"><path d="M0 1h5M7 1h5M0 4h5M7 4h5M0 7h5M7 7h5M0 10h5M7 10h5" stroke="#b5b5b5"/></svg>
<div class="ddg" style="left:506px;top:189px"></div>
<div class="gl" style="left:469px">Абзац</div>
<svg class="a" style="left:552px;top:211px" width="6" height="6" viewBox="0 0 6 6"><path d="M0.5 0.5h5v5h-5z" fill="none" stroke="#bbb" stroke-width=".8"/><path d="M2 2l3 3M3 5h2V3" fill="none" stroke="#aaa" stroke-width=".8"/></svg>
<div class="sep" style="left:562px"></div>

<!-- Drawing group -->
<div class="a" style="left:569px;top:153px;width:106px;height:48px;background:#fff;border:1px solid #c6c6c6"></div>
<div class="a" style="left:663px;top:154px;width:11px;height:16px;background:#e2e2e2"></div>
<div class="a" style="left:663px;top:154px;width:1px;height:46px;background:#dcdcdc"></div>
<div class="a" style="left:664px;top:170px;width:10px;height:1px;background:#dcdcdc"></div>
<div class="a" style="left:664px;top:185px;width:10px;height:1px;background:#dcdcdc"></div>
<div class="ddg" style="left:667px;top:161px;border-top:0;border-bottom:2px solid #c8c8c8"></div>
<div class="dd" style="left:667px;top:177px;border-top-color:#555"></div>
<div class="a" style="left:667px;top:190px;width:5px;height:1px;background:#777"></div>
<div class="dd" style="left:667px;top:193px;border-top-color:#555"></div>
<svg class="a" style="left:569px;top:153px" width="94" height="47" viewBox="0 0 94 47" fill="none" stroke="#666" stroke-width=".9">
  <rect x="3" y="3.5" width="11" height="8.5" stroke="#666"/><path d="M5 6h3M5 8.5h7M5 10.5h7" stroke="#3a7bd5" stroke-width=".8"/>
  <path d="M20 3l9 9"/><path d="M35 3l9 9"/><path d="M43 12l1.5 .3-.3-1.5" stroke-width="1"/>
  <rect x="50.5" y="4" width="12" height="7.5"/><ellipse cx="71.5" cy="7.8" rx="5.5" ry="3.8"/><rect x="80.5" y="4" width="11" height="7.5" rx="2"/>
  <path d="M3 29l4-11 4 11z"/><path d="M19 19h4v8h5"/><path d="M34 19h4v8h4l1.5 1"/><path d="M50 21h5v-2.5l5 5-5 5v-2.5h-5z"/><path d="M67 19h5v5h2.5l-5 5-5-5H67z"/><path d="M81 29v-7l3-3h4a3 3 0 0 1 3 3v1l-3 6z"/>
  <path d="M6 34c-3 2 3 4-1 6s4 2 2 5"/><path d="M19 35c5 0 8 4 8 10"/><path d="M34 44c2-9 5-11 7-3s3 5 4 4"/><path d="M55 34c-2 0-2 1-2 4s-1 3-2 3c1 0 2 0 2 3s0 4 2 4"/><path d="M66 34c2 0 2 1 2 4s1 3 2 3c-1 0-2 0-2 3s0 4-2 4"/><path d="M86 34l2 4.5 4.5.5-3.5 3 1 4.5-4-2.5-4 2.5 1-4.5-3.5-3 4.5-.5z"/>
</svg>
<svg class="a" style="left:697px;top:154px" width="22" height="23" viewBox="0 0 22 23"><rect x="7" y="6" width="8" height="8" fill="#f0c070"/><rect x="0.5" y="0.5" width="9" height="9" fill="#fff" stroke="#777"/><rect x="11.5" y="12.5" width="9" height="9" fill="#fff" stroke="#777"/><rect x="0.5" y="9.5" width="6" height="5" fill="#f0c070"/><rect x="15" y="6" width="5" height="6" fill="#f0c070"/></svg>
<div class="rt" style="left:679px;top:182px">Упорядкувати</div>
<div class="dd" style="left:707px;top:197px"></div>
<svg class="a" style="left:749px;top:154px" width="25" height="24" viewBox="0 0 25 24"><rect x="0.5" y="0.5" width="18" height="18" rx="3" fill="#f6f0f6" stroke="#d8d0d8"/><path d="M8 22l3-5 12-14 1.5 1.5-12 13z" fill="#c0c0c0"/></svg>
<div class="rd" style="left:742px;top:182px">Експрес-</div>
<div class="rd" style="left:747px;top:194px">стилі</div>
<div class="ddg" style="left:768px;top:198px"></div>
<svg class="a" style="left:784px;top:154px" width="11" height="11" viewBox="0 0 11 11"><path d="M2 5l4-4 4 4-4 4z" fill="none" stroke="#aaa"/><path d="M3 0.5v4" stroke="#aaa"/><path d="M9.5 7c0 1 .5 2 .5 2" stroke="#bbb"/></svg>
<div class="rd" style="left:797px;top:156px">Заливка фігури</div>
<div class="ddg" style="left:864px;top:160px"></div>
<svg class="a" style="left:784px;top:172px" width="11" height="11" viewBox="0 0 11 11"><path d="M1 10.5h4 M0.5 3.5v7h7" fill="none" stroke="#aaa"/><path d="M3 8l6-6.5 1.5 1.5-6 6z" fill="#bbb"/></svg>
<div class="rd" style="left:797px;top:174px">Контур фігури</div>
<div class="ddg" style="left:860px;top:178px"></div>
<svg class="a" style="left:784px;top:190px" width="12" height="11" viewBox="0 0 12 11"><path d="M0.5 6l5-5.5h6l-5 5.5z" fill="#eee" stroke="#aaa"/><path d="M0.5 6v4h6v-4.5 M6.5 10l5-5.5v-4" fill="#ccc" stroke="#aaa"/></svg>
<div class="rd" style="left:797px;top:191px">Ефекти для фігур</div>
<div class="ddg" style="left:871px;top:195px"></div>
<div class="gl" style="left:696px">Малювання</div>
<svg class="a" style="left:876px;top:211px" width="6" height="6" viewBox="0 0 6 6"><path d="M0.5 0.5h5v5h-5z" fill="none" stroke="#bbb" stroke-width=".8"/><path d="M2 2l3 3M3 5h2V3" fill="none" stroke="#aaa" stroke-width=".8"/></svg>
<div class="sep" style="left:886px"></div>

<!-- Editing group -->
<svg class="a" style="left:894px;top:154px" width="11" height="11" viewBox="0 0 11 11"><circle cx="6.5" cy="4.5" r="3.5" fill="none" stroke="#2d66b5" stroke-width="1.4"/><path d="M4 7l-3.2 3.2" stroke="#2d66b5" stroke-width="1.6"/></svg>
<div class="rt" style="left:908px;top:156px">Знайти</div>
<svg class="a" style="left:893px;top:171px" width="13" height="12" viewBox="0 0 13 12"><text x="0" y="5.5" font-size="6.5" fill="#7c5cae" font-family="Liberation Sans">ab</text><text x="4" y="11.5" font-size="6.5" fill="#2d66b5" font-family="Liberation Sans">ac</text><path d="M0.5 9h3M2.5 7.8l1.2 1.2-1.2 1.2" fill="none" stroke="#2d66b5" stroke-width=".7"/></svg>
<div class="rt" style="left:908px;top:174px">Замінити</div>
<div class="dd" style="left:953px;top:178px"></div>
<svg class="a" style="left:896px;top:188px" width="9" height="12" viewBox="0 0 9 12"><path d="M0.5 0.5v10l2.5-2.5 2 3.5 1.5-.8-2-3.3h3.5z" fill="#fff" stroke="#555" stroke-width=".8"/></svg>
<div class="rt" style="left:908px;top:191px">Виділити</div>
<div class="dd" style="left:947px;top:195px"></div>
<div class="gl" style="left:903px">Редагування</div>
<div class="sep" style="left:966px"></div>
<svg class="a" style="left:996px;top:211px" width="10" height="6" viewBox="0 0 10 6"><path d="M0.5 5.5L5 1l4.5 4.5" fill="none" stroke="#666" stroke-width="1"/></svg>

<!--RIBBON-->

<!-- thumbnails panel -->
<div class="a" style="left:19px;top:220px;width:159px;height:383px;background:#e6e6e6;overflow:hidden">
  <div class="t" style="left:9px;top:12.7px;font-size:12.5px;color:#444">3</div>
  <div class="t" style="left:9px;top:86.4px;font-size:12.5px;color:#444">4</div>
  <div class="t" style="left:9px;top:158.2px;font-size:12.5px;color:#444">5</div>
  <div class="t" style="left:9px;top:230.4px;font-size:12.5px;color:#c4502e">6</div>
  <div class="t" style="left:9px;top:303.9px;font-size:12.5px;color:#444">7</div>
  <div class="t" style="left:9px;top:375.4px;font-size:12.5px;color:#444">8</div>
  <!-- thumb 3 -->
<div class="a" style="left:27.5px;top:15px;width:100px;height:56px;background:linear-gradient(100deg,#e9e9ee 0%,#f7f7f9 30%,#eef0f3 60%,#f6f6f8 100%);border:1px solid #d0d0d0;overflow:hidden">
  <div class="a" style="left:19px;top:5px;width:59px;height:3.5px;background:#c9a9a4"></div>
  <div class="a" style="left:10px;top:12px;width:81px;height:31px;background:repeating-linear-gradient(#fff0 0 1.2px,#b7b7c0 1.2px 2.2px,#fff0 2.2px 3.2px);opacity:.5"></div>
  <div class="a" style="left:0;top:0;width:16px;height:56px;background:linear-gradient(90deg,#dfe2e8,#f5f5f700)"></div>
</div>
<!-- thumb 4 -->
<div class="a" style="left:27.5px;top:88px;width:100px;height:56px;background:#fff;box-shadow:inset 0 0 0 1px #d8d8d8;overflow:hidden">
  <div class="a" style="left:36px;top:2px;width:37px;height:1.6px;background:#3a4a8a;opacity:.7"></div>
  <div class="a" style="left:7px;top:7px;width:26.5px;height:6.5px;background:#e58a44;border-radius:1px"></div><div class="a" style="left:34.5px;top:7px;width:47.5px;height:6.5px;background:#f7dcd8"></div>
  <div class="a" style="left:7px;top:15px;width:26.5px;height:6.5px;background:#c27a6c;border-radius:1px"></div><div class="a" style="left:34.5px;top:15px;width:47.5px;height:6.5px;background:#f4e1e0"></div>
  <div class="a" style="left:7px;top:22.8px;width:26.5px;height:6.5px;background:#a9a9a9;border-radius:1px"></div><div class="a" style="left:34.5px;top:22.8px;width:47.5px;height:6.5px;background:#e9e6ea"></div>
  <div class="a" style="left:7px;top:30px;width:26.5px;height:6.5px;background:#3f6fca;border-radius:1px"></div><div class="a" style="left:34.5px;top:30px;width:47.5px;height:6.5px;background:#dde2f2"></div>
  <div class="a" style="left:7px;top:37.7px;width:26.5px;height:6.5px;background:#3eab8a;border-radius:1px"></div><div class="a" style="left:34.5px;top:37.7px;width:47.5px;height:6.5px;background:#dbeee8"></div>
  <div class="a" style="left:7px;top:45.7px;width:26.5px;height:6.5px;background:#62a84e;border-radius:1px"></div><div class="a" style="left:34.5px;top:45.7px;width:47.5px;height:6.5px;background:#e4efdc"></div><div class="a" style="left:12px;top:9.7px;width:16px;height:1px;background:#fff;opacity:.7"></div><div class="a" style="left:40px;top:8.8px;width:38px;height:1px;background:#888;opacity:.35"></div><div class="a" style="left:44px;top:10.8px;width:30px;height:1px;background:#888;opacity:.35"></div><div class="a" style="left:12px;top:17.7px;width:16px;height:1px;background:#fff;opacity:.7"></div><div class="a" style="left:40px;top:16.8px;width:38px;height:1px;background:#888;opacity:.35"></div><div class="a" style="left:44px;top:18.8px;width:30px;height:1px;background:#888;opacity:.35"></div><div class="a" style="left:12px;top:25.5px;width:16px;height:1px;background:#fff;opacity:.7"></div><div class="a" style="left:40px;top:24.6px;width:38px;height:1px;background:#888;opacity:.35"></div><div class="a" style="left:44px;top:26.6px;width:30px;height:1px;background:#888;opacity:.35"></div><div class="a" style="left:12px;top:32.7px;width:16px;height:1px;background:#fff;opacity:.7"></div><div class="a" style="left:40px;top:31.8px;width:38px;height:1px;background:#888;opacity:.35"></div><div class="a" style="left:44px;top:33.8px;width:30px;height:1px;background:#888;opacity:.35"></div><div class="a" style="left:12px;top:40.400000000000006px;width:16px;height:1px;background:#fff;opacity:.7"></div><div class="a" style="left:40px;top:39.5px;width:38px;height:1px;background:#888;opacity:.35"></div><div class="a" style="left:44px;top:41.5px;width:30px;height:1px;background:#888;opacity:.35"></div><div class="a" style="left:12px;top:48.400000000000006px;width:16px;height:1px;background:#fff;opacity:.7"></div><div class="a" style="left:40px;top:47.5px;width:38px;height:1px;background:#888;opacity:.35"></div><div class="a" style="left:44px;top:49.5px;width:30px;height:1px;background:#888;opacity:.35"></div>
</div>
<!-- thumb 5 -->
<div class="a" style="left:27.5px;top:161px;width:100px;height:56px;background:#fff;box-shadow:inset 0 0 0 1px #d8d8d8;overflow:hidden">
  <div class="a" style="left:13px;top:2.5px;width:76px;height:1.2px;background:#3a4070;opacity:.55"></div><div class="a" style="left:10px;top:5px;width:80px;height:1.2px;background:#3a4070;opacity:.55"></div><div class="a" style="left:39px;top:7.5px;width:22px;height:1.2px;background:#3a4070;opacity:.55"></div><div class="a" style="left:35px;top:16.5px;width:28px;height:1px;background:#e8e8e8;opacity:.8"></div><div class="a" style="left:24px;top:30.5px;width:48px;height:2px;background:#f0d8b0;opacity:.6"></div><div class="a" style="left:31px;top:44.5px;width:50px;height:2.5px;background:#f8d0c0;opacity:.6"></div>
  <div class="a" style="left:17.5px;top:10.6px;width:57.5px;height:12.2px;background:#a9a9a9"></div>
  <div class="a" style="left:30px;top:13px;width:18px;height:2px;background:#eee"></div>
  <div class="a" style="left:22.5px;top:26px;width:58px;height:12px;background:#b5700e"></div>
  <div class="a" style="left:35px;top:28px;width:18px;height:2px;background:#f5e0c0"></div>
  <div class="a" style="left:27.5px;top:41px;width:58px;height:12.5px;background:#c2410e"></div>
  <div class="a" style="left:40px;top:43px;width:18px;height:2px;background:#f8d8c8"></div>
  <div class="a" style="left:69px;top:19px;width:0;height:0;border-left:3px solid transparent;border-right:3px solid transparent;border-top:6px solid #d0d0d0"></div>
  <div class="a" style="left:74px;top:35px;width:0;height:0;border-left:3px solid transparent;border-right:3px solid transparent;border-top:6px solid #f0b030"></div>
</div>
<!-- thumb 6 (selected) -->
<div class="a" style="left:25px;top:231.3px;width:105px;height:61.5px;background:#c4502e"></div>
<div class="a" style="left:27.5px;top:234px;width:100px;height:56px;background:#fff;overflow:hidden">
  <div class="a" style="left:0;top:0;width:614px;height:352px;transform:scale(.1629);transform-origin:0 0">
  <!-- head collage -->
<svg class="a" style="left:7px;top:36px" width="62" height="68" viewBox="50 75 460 505">
  <path d="M58 320C40 210 100 92 235 80C330 74 385 120 395 190L330 240L240 270L170 330L130 420L120 560L95 560L100 430L70 380Z" fill="#a97a6a"/>
  <path d="M60 300C70 230 90 170 140 120L180 200L120 260L80 330Z" fill="#9a6a5c"/>
  <path d="M120 110l45 75 45-75zM120 160l45-75 45 75z" fill="none" stroke="#6e3430" stroke-width="7"/>
  <path d="M265 135a25 25 0 1 1 40 -20M300 100l20 -15" fill="none" stroke="#6e3430" stroke-width="7"/>
  <path d="M200 80h60v20h-60z" fill="#3f86c8"/>
  <path d="M150 235h55M160 235v40M195 235v40" stroke="#5a2a24" stroke-width="8"/>
  <ellipse cx="160" cy="280" rx="40" ry="22" fill="#3a7cc0"/>
  <path d="M105 305h20v100h-20zM85 330h60v18H85z" fill="#9cc0cc"/>
  <path d="M90 420L150 400L170 470L180 560H100Z" fill="#2a201c"/>
  <path d="M110 470L140 460L150 560H115Z" fill="#9a7a60"/>
  <path d="M190 240L240 195L300 175L340 230L350 320L335 430L320 560L255 560L240 480Z" fill="#1a1616"/>
  <path d="M250 200C292 206 318 250 324 320L318 420L298 458L280 545L208 550L202 482L186 470L182 432L172 418L178 402L168 388L176 372L160 352L182 322L202 262Z" fill="#ecebe6"/>
  <path d="M205 300l40 -2" stroke="#b8b8b0" stroke-width="5"/>
  <path d="M295 175C372 160 430 200 446 252L466 292L446 310L452 335L440 350L446 380L420 420L372 442L335 482L320 400L336 322L312 252Z" fill="#7494b4"/>
  <path d="M330 250C350 225 380 222 405 235L390 262Z" fill="#58789a"/>
  <circle cx="340" cy="285" r="22" fill="none" stroke="#d9d2a0" stroke-width="6"/>
  <path d="M255 455L320 420L335 560H245Z" fill="#6f8499"/>
  <path d="M402 482L440 382L478 372L504 432L482 522L462 560L400 560Z" fill="#8eaac4"/>
  <path d="M388 545h88v35h-88z" fill="#a8bcd2"/>
</svg>
<!-- rainbow people -->
<svg class="a" style="left:154px;top:38px" width="79" height="62" viewBox="0 0 79 62">
  <defs><radialGradient id="rg1m" cx="40%" cy="40%" r="75%"><stop offset="0" stop-color="#fdfdfd"/><stop offset=".45" stop-color="#d8d8da"/><stop offset="1" stop-color="#4a4a52"/></radialGradient>
  <clipPath id="cem"><ellipse cx="50.5" cy="15" rx="10" ry="13.5"/></clipPath></defs>
  <rect width="79" height="62" fill="url(#rg1m)"/>
  <g clip-path="url(#cem)"><rect x="40" y="1" width="22" height="5" fill="#e53a3a"/><rect x="40" y="6" width="22" height="4" fill="#f39a2a"/><rect x="40" y="10" width="22" height="4" fill="#f2e032"/><rect x="40" y="14" width="22" height="4" fill="#3a9a48"/><rect x="40" y="18" width="22" height="4.5" fill="#2f5cc0"/><rect x="40" y="22.5" width="22" height="6" fill="#8a3ab0"/></g>
  <g fill="#222">
    <circle cx="6" cy="33.5" r="2.4"/><path d="M2 37h8l1.5 13h-2l-.5 11.5h-2.5l-.5-9-.5 9H3.5L3 50H.5z"/>
    <circle cx="17" cy="33.5" r="2.4"/><path d="M13 37h8l1.5 13h-2l-.5 11.5h-2.5l-.5-9-.5 9h-2.5L14 50h-2.5z"/>
    <circle cx="28" cy="33.5" r="2.4"/><path d="M24 37h8l1.5 13h-2l-.5 11.5h-2.5l-.5-9-.5 9h-2.5L25 50h-2.5z"/>
    <circle cx="38.6" cy="33.5" r="2.4"/><path d="M34.6 37h8l1.5 13h-2l-.5 11.5h-2.5l-.5-9-.5 9h-2.5l-.5-11.5h-2.5z"/>
    <circle cx="62.4" cy="33.5" r="2.4"/><path d="M58.4 37h8l1.5 13h-2l-.5 11.5h-2.5l-.5-9-.5 9h-2.5l-.5-11.5h-2.5z"/>
    <circle cx="73.6" cy="33.5" r="2.4"/><path d="M69.6 37h8l1.5 13h-2l-.5 11.5h-2.5l-.5-9-.5 9h-2.5l-.5-11.5h-2.5z"/>
  </g>
  <g fill="#2f6cc4"><circle cx="50.5" cy="33.5" r="2.4"/><path d="M44 28l3 8h7l3-8 1.3.6-3 10-.8 11h-1.5l-.5 11.5h-2l-.5-9-.5 9h-2l-.5-11.5h-1.5l-.8-11-3-10z"/></g>
</svg>
<!-- ageism -->
<svg class="a" style="left:7px;top:116px" width="80" height="72" viewBox="0 0 702 632">
  <path d="M55 218L240 212L640 602L255 606Z" fill="#878787"/>
  <path d="M160 215L440 600" stroke="#fff" stroke-width="9" stroke-dasharray="40 25"/>
  <text x="200" y="415" font-size="85" font-weight="bold" fill="#fff" font-family="Liberation Sans">50</text>
  <path d="M180 350h160" stroke="#eee" stroke-width="10"/>
  <path d="M185 335l12-40 12 40z M275 335l12-40 12 40z" fill="#e04a2a"/>
  <g><rect x="88" y="110" width="36" height="55" fill="#f2c230"/><circle cx="106" cy="98" r="11" fill="#4a3a30"/><rect x="90" y="165" width="30" height="58" fill="#6a6a6a"/></g>
  <g><rect x="180" y="140" width="36" height="60" fill="#1a1a1a"/><circle cx="197" cy="128" r="11" fill="#2a2a2a"/><rect x="183" y="200" width="30" height="65" fill="#2a2a2a"/></g>
  <g><rect x="240" y="115" width="38" height="58" fill="#2f8ad0"/><circle cx="258" cy="103" r="11" fill="#5a3a2a"/><rect x="235" y="173" width="40" height="40" fill="#c06a40"/><rect x="245" y="213" width="25" height="22" fill="#444"/></g>
  <g><rect x="370" y="285" width="62" height="90" fill="#3f4a4a"/><circle cx="388" cy="272" r="13" fill="#3a3a3a"/><rect x="375" y="375" width="48" height="95" fill="#1e1e1e"/></g>
  <text x="360" y="93" font-size="34" fill="#999" font-family="Liberation Serif">employment</text>
  <text x="388" y="155" font-size="50" fill="#333" font-family="Liberation Serif">AGEISM</text>
  <path d="M450 172h120M450 190h120M450 207h120" stroke="#ccc" stroke-width="4"/>
</svg>
<!-- scales -->
<svg class="a" style="left:151px;top:113px" width="92" height="71" viewBox="52 52 683 526">
  <defs><radialGradient id="rg2m" cx="48%" cy="60%" r="70%"><stop offset="0" stop-color="#4a90dc"/><stop offset=".6" stop-color="#2d66b8"/><stop offset="1" stop-color="#1b3f86"/></radialGradient></defs>
  <rect x="52" y="52" width="683" height="526" fill="url(#rg2m)"/>
  <path d="M405 85V578" stroke="#000" stroke-width="11"/>
  <path d="M198 172C300 160 370 185 405 88C440 185 510 160 608 172" fill="none" stroke="#000" stroke-width="13"/>
  <path d="M205 175L125 450M205 175L285 450M600 175L520 440M600 175L680 440" stroke="#111" stroke-width="3"/>
  <ellipse cx="205" cy="452" rx="82" ry="14" fill="#000"/><ellipse cx="600" cy="442" rx="82" ry="14" fill="#000"/>
  <circle cx="190" cy="350" r="36" fill="none" stroke="#fff" stroke-width="20"/>
  <path d="M215 322L255 282M220 278h45v45" fill="none" stroke="#fff" stroke-width="20"/>
  <circle cx="603" cy="318" r="38" fill="none" stroke="#fff" stroke-width="20"/>
  <path d="M603 355V445M575 405h56" stroke="#fff" stroke-width="20"/>
</svg>
<div class="st" style="left:203.5px;top:10.2px;width:300px;text-align:center;font-size:15.3px">ВИДИ ДИСКРИМІНАЦІЇ</div>
<div class="st" style="left:180.6px;top:46.0px;width:300px;text-align:center;font-size:11.4px">РАСИЗМ</div>
<div class="st" style="left:187.2px;top:66.7px;width:300px;text-align:center;font-size:11.4px">упередження стосовно людей</div>
<div class="st" style="left:179.0px;top:82.8px;width:300px;text-align:center;font-size:11.4px">залежно від їхньої раси.</div>
<div class="st" style="left:178.7px;top:95.9px;width:300px;text-align:center;font-size:11.4px">Віра в існування біологічно</div>
<div class="st" style="left:179.3px;top:109.7px;width:300px;text-align:center;font-size:11.4px">відмінних людських рас і в те, що</div>
<div class="st" style="left:178.7px;top:123.5px;width:300px;text-align:center;font-size:11.4px">якісь з них є кращими або</div>
<div class="st" style="left:179.2px;top:136.1px;width:300px;text-align:center;font-size:11.4px">гіршими</div>
<div class="st" style="left:367.7px;top:49.4px;width:300px;text-align:center;font-size:11.4px">СЕКСИЗМ</div>
<div class="st" style="left:363.3px;top:68.6px;width:300px;text-align:center;font-size:11.4px">упередження засновані на</div>
<div class="st" style="left:363.5px;top:82.5px;width:300px;text-align:center;font-size:11.4px">біологічній статі чи гендері.</div>
<div class="st" style="left:363.3px;top:96.2px;width:300px;text-align:center;font-size:11.4px">Сексизм може наділяти</div>
<div class="st" style="left:362.7px;top:109.5px;width:300px;text-align:center;font-size:11.4px">привілеями будь-яку стать,</div>
<div class="st" style="left:363.3px;top:122.8px;width:300px;text-align:center;font-size:11.4px">однак історично, відповідно до</div>
<div class="st" style="left:363.5px;top:136.5px;width:300px;text-align:center;font-size:11.4px">патріархальної моделі</div>
<div class="st" style="left:366.2px;top:152.5px;width:300px;text-align:center;font-size:11.4px">суспільства, є ситуація, коли</div>
<div class="st" style="left:366.5px;top:165.5px;width:300px;text-align:center;font-size:11.4px">сексизм спрямовано на жінок</div>
<div class="st" style="left:187.7px;top:181.2px;width:300px;text-align:center;font-size:11.4px">ГЕТЕРОСЕКСИЗМ</div>
<div class="st" style="left:187.5px;top:199.0px;width:300px;text-align:center;font-size:11.4px">сукупність упереджень, забубонів</div>
<div class="st" style="left:187.7px;top:212.1px;width:300px;text-align:center;font-size:11.4px">та стереотипів на користь</div>
<div class="st" style="left:187.7px;top:226.1px;width:300px;text-align:center;font-size:11.4px">домінації гетеросексульних</div>
<div class="st" style="left:188.0px;top:240.0px;width:300px;text-align:center;font-size:11.4px">стосунків.</div>
<div class="st" style="left:189.9px;top:255.9px;width:300px;text-align:center;font-size:11.4px;transform:scaleX(.94)">Тобто, всі люди мають бути</div>
<div class="st" style="left:187.2px;top:269.9px;width:300px;text-align:center;font-size:11.4px">гетеросексуальні, оскільки це</div>
<div class="st" style="left:187.3px;top:283.5px;width:300px;text-align:center;font-size:11.4px">єдина прийнятна норма</div>
<div class="st" style="left:186.5px;top:296.9px;width:300px;text-align:center;font-size:11.4px">сексуальної поведінки людини, а</div>
<div class="st" style="left:187.4px;top:309.5px;width:300px;text-align:center;font-size:11.4px">все інше – хвороба</div>
<div class="st" style="left:37.3px;top:199.2px;font-size:11.4px">ЕЙДЖИЗМ</div>
<div class="st" style="left:-40.1px;top:216.5px;width:300px;text-align:center;font-size:11.4px">упередження стосовно людей</div>
<div class="st" style="left:-39.6px;top:230.0px;width:300px;text-align:center;font-size:11.4px">через їхній вік. Наприклад,</div>
<div class="st" style="left:-40.3px;top:243.8px;width:300px;text-align:center;font-size:11.4px">молоді люди є кращими за</div>
<div class="st" style="left:-39.4px;top:257.3px;width:300px;text-align:center;font-size:11.4px">старших, адже скоріше</div>
<div class="st" style="left:-34.2px;top:267.3px;width:300px;text-align:center;font-size:11.4px">навчаються, чи навпаки дурніші,</div>
<div class="st" style="left:-34.1px;top:280.7px;width:300px;text-align:center;font-size:11.4px">адже менше знають</div>
  </div>
</div>
<!-- thumb 7 -->
<div class="a" style="left:27.5px;top:306px;width:100px;height:56px;background:#fff;box-shadow:inset 0 0 0 1px #d8d8d8;overflow:hidden">
  <div class="a" style="left:0;top:0;width:34px;height:56px;background:linear-gradient(#fbfbfc 0%,#f1f1f3 45%,#d0d0d2 80%,#b4b4b6 100%)"></div>
  <div class="a" style="left:34px;top:0;width:66px;height:27px;background:linear-gradient(#fbfbfb,#ececf0)"></div>
  <div class="a" style="left:31px;top:2.5px;width:37px;height:2.5px;background:#6a6aa0;opacity:.5"></div>
  <div class="a" style="left:4px;top:6.5px;width:25px;height:1px;background:#3a3a6a;opacity:.6"></div>
  <div class="a" style="left:4px;top:9px;width:25px;height:6px;background:repeating-linear-gradient(#fff0 0 1.4px,#6a6f90 1.4px 2.1px);opacity:0.45"></div>
  <div class="a" style="left:37px;top:11px;width:20px;height:1px;background:#3a3a6a;opacity:.6"></div>
  <div class="a" style="left:35px;top:13px;width:23px;height:6px;background:repeating-linear-gradient(#fff0 0 1.4px,#6a6f90 1.4px 2.1px);opacity:0.45"></div>
  <div class="a" style="left:74px;top:6px;width:20px;height:1px;background:#3a3a6a;opacity:.6"></div>
  <div class="a" style="left:74px;top:9px;width:22px;height:15px;background:repeating-linear-gradient(#fff0 0 1.4px,#6a6f90 1.4px 2.1px);opacity:0.45"></div>
  <div class="a" style="left:5px;top:24.5px;width:24px;height:1px;background:#3a3a6a;opacity:.6"></div>
  <div class="a" style="left:6px;top:27px;width:22px;height:7px;background:repeating-linear-gradient(#fff0 0 1.4px,#6a6f90 1.4px 2.1px);opacity:0.45"></div>
  <div class="a" style="left:38px;top:29px;width:5px;height:3px;background:#2a3070"></div>
  <div class="a" style="left:36px;top:36px;width:7px;height:5px;border-radius:50%;background:#1e2a60"></div>
  <div class="a" style="left:46px;top:32px;width:7px;height:5px;border-radius:50%;border:1.3px solid #d83a2a"></div>
  <div class="a" style="left:51px;top:29.5px;width:7px;height:5px;border-radius:50%;background:#1e2a60"></div>
  <div class="a" style="left:52px;top:36.5px;width:7px;height:5px;border-radius:50%;background:#1e2a60"></div>
  <div class="a" style="left:82px;top:33px;width:6px;height:1px;background:#3a3a6a;opacity:.6"></div>
  <div class="a" style="left:76px;top:35px;width:18px;height:17px;background:repeating-linear-gradient(#fff0 0 1.4px,#6a6f90 1.4px 2.1px);opacity:0.4"></div>
</div>
<!-- thumb 8 -->
<div class="a" style="left:27.5px;top:379.5px;width:100px;height:10px;background:#fff;box-shadow:inset 0 0 0 1px #d8d8d8;overflow:hidden">
  <div class="a" style="left:22px;top:1px;width:56px;height:1.5px;background:#6a6a80;opacity:.5"></div>
</div>
<!--THUMBS-->
</div>
<!-- panel scrollbar -->
<div class="a" style="left:163px;top:220px;width:13px;height:383px;background:#dadada"></div>
<div class="a" style="left:163px;top:221px;width:12px;height:13px;background:#fff"></div>
<div class="a" style="left:166px;top:226px;width:0;height:0;border-left:3px solid transparent;border-right:3px solid transparent;border-bottom:3px solid #555"></div>
<div class="a" style="left:163px;top:245px;width:12px;height:31px;background:#fff"></div>
<div class="a" style="left:163px;top:590px;width:12px;height:12px;background:#fff"></div>
<div class="a" style="left:166px;top:595px;width:0;height:0;border-left:3px solid transparent;border-right:3px solid transparent;border-top:3px solid #555"></div>
<div class="a" style="left:178px;top:220px;width:1px;height:383px;background:#d2d2d2"></div>

<!-- slide -->
<div class="a" style="left:282px;top:225px;width:614px;height:352px;background:#cfcfcf"></div>
<div id="slide" class="a" style="left:281px;top:224px;width:614px;height:352px;background:#fff;overflow:hidden">
<div class="st" style="left:203.5px;top:10.2px;width:300px;text-align:center;font-size:15.3px">ВИДИ ДИСКРИМІНАЦІЇ</div>
<div class="st" style="left:180.6px;top:46.0px;width:300px;text-align:center;font-size:11.4px">РАСИЗМ</div>
<div class="st" style="left:187.2px;top:66.7px;width:300px;text-align:center;font-size:11.4px">упередження стосовно людей</div>
<div class="st" style="left:179.0px;top:82.8px;width:300px;text-align:center;font-size:11.4px">залежно від їхньої раси.</div>
<div class="st" style="left:178.7px;top:95.9px;width:300px;text-align:center;font-size:11.4px">Віра в існування біологічно</div>
<div class="st" style="left:179.3px;top:109.7px;width:300px;text-align:center;font-size:11.4px">відмінних людських рас і в те, що</div>
<div class="st" style="left:178.7px;top:123.5px;width:300px;text-align:center;font-size:11.4px">якісь з них є кращими або</div>
<div class="st" style="left:179.2px;top:136.1px;width:300px;text-align:center;font-size:11.4px">гіршими</div>
<div class="st" style="left:367.7px;top:49.4px;width:300px;text-align:center;font-size:11.4px">СЕКСИЗМ</div>
<div class="st" style="left:363.3px;top:68.6px;width:300px;text-align:center;font-size:11.4px">упередження засновані на</div>
<div class="st" style="left:363.5px;top:82.5px;width:300px;text-align:center;font-size:11.4px">біологічній статі чи гендері.</div>
<div class="st" style="left:363.3px;top:96.2px;width:300px;text-align:center;font-size:11.4px">Сексизм може наділяти</div>
<div class="st" style="left:362.7px;top:109.5px;width:300px;text-align:center;font-size:11.4px">привілеями будь-яку стать,</div>
<div class="st" style="left:363.3px;top:122.8px;width:300px;text-align:center;font-size:11.4px">однак історично, відповідно до</div>
<div class="st" style="left:363.5px;top:136.5px;width:300px;text-align:center;font-size:11.4px">патріархальної моделі</div>
<div class="st" style="left:366.2px;top:152.5px;width:300px;text-align:center;font-size:11.4px">суспільства, є ситуація, коли</div>
<div class="st" style="left:366.5px;top:165.5px;width:300px;text-align:center;font-size:11.4px">сексизм спрямовано на жінок</div>
<div class="st" style="left:187.7px;top:181.2px;width:300px;text-align:center;font-size:11.4px">ГЕТЕРОСЕКСИЗМ</div>
<div class="st" style="left:187.5px;top:199.0px;width:300px;text-align:center;font-size:11.4px">сукупність упереджень, забубонів</div>
<div class="st" style="left:187.7px;top:212.1px;width:300px;text-align:center;font-size:11.4px">та стереотипів на користь</div>
<div class="st" style="left:187.7px;top:226.1px;width:300px;text-align:center;font-size:11.4px">домінації гетеросексульних</div>
<div class="st" style="left:188.0px;top:240.0px;width:300px;text-align:center;font-size:11.4px">стосунків.</div>
<div class="st" style="left:189.9px;top:255.9px;width:300px;text-align:center;font-size:11.4px;transform:scaleX(.94)">Тобто, всі люди мають бути</div>
<div class="st" style="left:187.2px;top:269.9px;width:300px;text-align:center;font-size:11.4px">гетеросексуальні, оскільки це</div>
<div class="st" style="left:187.3px;top:283.5px;width:300px;text-align:center;font-size:11.4px">єдина прийнятна норма</div>
<div class="st" style="left:186.5px;top:296.9px;width:300px;text-align:center;font-size:11.4px">сексуальної поведінки людини, а</div>
<div class="st" style="left:187.4px;top:309.5px;width:300px;text-align:center;font-size:11.4px">все інше – хвороба</div>
<div class="st" style="left:37.3px;top:199.2px;font-size:11.4px">ЕЙДЖИЗМ</div>
<div class="st" style="left:-40.1px;top:216.5px;width:300px;text-align:center;font-size:11.4px">упередження стосовно людей</div>
<div class="st" style="left:-39.6px;top:230.0px;width:300px;text-align:center;font-size:11.4px">через їхній вік. Наприклад,</div>
<div class="st" style="left:-40.3px;top:243.8px;width:300px;text-align:center;font-size:11.4px">молоді люди є кращими за</div>
<div class="st" style="left:-39.4px;top:257.3px;width:300px;text-align:center;font-size:11.4px">старших, адже скоріше</div>
<div class="st" style="left:-34.2px;top:267.3px;width:300px;text-align:center;font-size:11.4px">навчаються, чи навпаки дурніші,</div>
<div class="st" style="left:-34.1px;top:280.7px;width:300px;text-align:center;font-size:11.4px">адже менше знають</div>
<!-- head collage -->
<svg class="a" style="left:7px;top:36px" width="62" height="68" viewBox="50 75 460 505">
  <path d="M58 320C40 210 100 92 235 80C330 74 385 120 395 190L330 240L240 270L170 330L130 420L120 560L95 560L100 430L70 380Z" fill="#a97a6a"/>
  <path d="M60 300C70 230 90 170 140 120L180 200L120 260L80 330Z" fill="#9a6a5c"/>
  <path d="M120 110l45 75 45-75zM120 160l45-75 45 75z" fill="none" stroke="#6e3430" stroke-width="7"/>
  <path d="M265 135a25 25 0 1 1 40 -20M300 100l20 -15" fill="none" stroke="#6e3430" stroke-width="7"/>
  <path d="M200 80h60v20h-60z" fill="#3f86c8"/>
  <path d="M150 235h55M160 235v40M195 235v40" stroke="#5a2a24" stroke-width="8"/>
  <ellipse cx="160" cy="280" rx="40" ry="22" fill="#3a7cc0"/>
  <path d="M105 305h20v100h-20zM85 330h60v18H85z" fill="#9cc0cc"/>
  <path d="M90 420L150 400L170 470L180 560H100Z" fill="#2a201c"/>
  <path d="M110 470L140 460L150 560H115Z" fill="#9a7a60"/>
  <path d="M190 240L240 195L300 175L340 230L350 320L335 430L320 560L255 560L240 480Z" fill="#1a1616"/>
  <path d="M250 200C292 206 318 250 324 320L318 420L298 458L280 545L208 550L202 482L186 470L182 432L172 418L178 402L168 388L176 372L160 352L182 322L202 262Z" fill="#ecebe6"/>
  <path d="M205 300l40 -2" stroke="#b8b8b0" stroke-width="5"/>
  <path d="M295 175C372 160 430 200 446 252L466 292L446 310L452 335L440 350L446 380L420 420L372 442L335 482L320 400L336 322L312 252Z" fill="#7494b4"/>
  <path d="M330 250C350 225 380 222 405 235L390 262Z" fill="#58789a"/>
  <circle cx="340" cy="285" r="22" fill="none" stroke="#d9d2a0" stroke-width="6"/>
  <path d="M255 455L320 420L335 560H245Z" fill="#6f8499"/>
  <path d="M402 482L440 382L478 372L504 432L482 522L462 560L400 560Z" fill="#8eaac4"/>
  <path d="M388 545h88v35h-88z" fill="#a8bcd2"/>
</svg>
<!-- rainbow people -->
<svg class="a" style="left:154px;top:38px" width="79" height="62" viewBox="0 0 79 62">
  <defs><radialGradient id="rg1" cx="40%" cy="40%" r="75%"><stop offset="0" stop-color="#fdfdfd"/><stop offset=".45" stop-color="#d8d8da"/><stop offset="1" stop-color="#4a4a52"/></radialGradient>
  <clipPath id="ce"><ellipse cx="50.5" cy="15" rx="10" ry="13.5"/></clipPath></defs>
  <rect width="79" height="62" fill="url(#rg1)"/>
  <g clip-path="url(#ce)"><rect x="40" y="1" width="22" height="5" fill="#e53a3a"/><rect x="40" y="6" width="22" height="4" fill="#f39a2a"/><rect x="40" y="10" width="22" height="4" fill="#f2e032"/><rect x="40" y="14" width="22" height="4" fill="#3a9a48"/><rect x="40" y="18" width="22" height="4.5" fill="#2f5cc0"/><rect x="40" y="22.5" width="22" height="6" fill="#8a3ab0"/></g>
  <g fill="#222">
    <circle cx="6" cy="33.5" r="2.4"/><path d="M2 37h8l1.5 13h-2l-.5 11.5h-2.5l-.5-9-.5 9H3.5L3 50H.5z"/>
    <circle cx="17" cy="33.5" r="2.4"/><path d="M13 37h8l1.5 13h-2l-.5 11.5h-2.5l-.5-9-.5 9h-2.5L14 50h-2.5z"/>
    <circle cx="28" cy="33.5" r="2.4"/><path d="M24 37h8l1.5 13h-2l-.5 11.5h-2.5l-.5-9-.5 9h-2.5L25 50h-2.5z"/>
    <circle cx="38.6" cy="33.5" r="2.4"/><path d="M34.6 37h8l1.5 13h-2l-.5 11.5h-2.5l-.5-9-.5 9h-2.5l-.5-11.5h-2.5z"/>
    <circle cx="62.4" cy="33.5" r="2.4"/><path d="M58.4 37h8l1.5 13h-2l-.5 11.5h-2.5l-.5-9-.5 9h-2.5l-.5-11.5h-2.5z"/>
    <circle cx="73.6" cy="33.5" r="2.4"/><path d="M69.6 37h8l1.5 13h-2l-.5 11.5h-2.5l-.5-9-.5 9h-2.5l-.5-11.5h-2.5z"/>
  </g>
  <g fill="#2f6cc4"><circle cx="50.5" cy="33.5" r="2.4"/><path d="M44 28l3 8h7l3-8 1.3.6-3 10-.8 11h-1.5l-.5 11.5h-2l-.5-9-.5 9h-2l-.5-11.5h-1.5l-.8-11-3-10z"/></g>
</svg>
<!-- ageism -->
<svg class="a" style="left:7px;top:116px" width="80" height="72" viewBox="0 0 702 632">
  <path d="M55 218L240 212L640 602L255 606Z" fill="#878787"/>
  <path d="M160 215L440 600" stroke="#fff" stroke-width="9" stroke-dasharray="40 25"/>
  <text x="200" y="415" font-size="85" font-weight="bold" fill="#fff" font-family="Liberation Sans">50</text>
  <path d="M180 350h160" stroke="#eee" stroke-width="10"/>
  <path d="M185 335l12-40 12 40z M275 335l12-40 12 40z" fill="#e04a2a"/>
  <g><rect x="88" y="110" width="36" height="55" fill="#f2c230"/><circle cx="106" cy="98" r="11" fill="#4a3a30"/><rect x="90" y="165" width="30" height="58" fill="#6a6a6a"/></g>
  <g><rect x="180" y="140" width="36" height="60" fill="#1a1a1a"/><circle cx="197" cy="128" r="11" fill="#2a2a2a"/><rect x="183" y="200" width="30" height="65" fill="#2a2a2a"/></g>
  <g><rect x="240" y="115" width="38" height="58" fill="#2f8ad0"/><circle cx="258" cy="103" r="11" fill="#5a3a2a"/><rect x="235" y="173" width="40" height="40" fill="#c06a40"/><rect x="245" y="213" width="25" height="22" fill="#444"/></g>
  <g><rect x="370" y="285" width="62" height="90" fill="#3f4a4a"/><circle cx="388" cy="272" r="13" fill="#3a3a3a"/><rect x="375" y="375" width="48" height="95" fill="#1e1e1e"/></g>
  <text x="360" y="93" font-size="34" fill="#999" font-family="Liberation Serif">employment</text>
  <text x="388" y="155" font-size="50" fill="#333" font-family="Liberation Serif">AGEISM</text>
  <path d="M450 172h120M450 190h120M450 207h120" stroke="#ccc" stroke-width="4"/>
</svg>
<!-- scales -->
<svg class="a" style="left:151px;top:113px" width="92" height="71" viewBox="52 52 683 526">
  <defs><radialGradient id="rg2" cx="48%" cy="60%" r="70%"><stop offset="0" stop-color="#4a90dc"/><stop offset=".6" stop-color="#2d66b8"/><stop offset="1" stop-color="#1b3f86"/></radialGradient></defs>
  <rect x="52" y="52" width="683" height="526" fill="url(#rg2)"/>
  <path d="M405 85V578" stroke="#000" stroke-width="11"/>
  <path d="M198 172C300 160 370 185 405 88C440 185 510 160 608 172" fill="none" stroke="#000" stroke-width="13"/>
  <path d="M205 175L125 450M205 175L285 450M600 175L520 440M600 175L680 440" stroke="#111" stroke-width="3"/>
  <ellipse cx="205" cy="452" rx="82" ry="14" fill="#000"/><ellipse cx="600" cy="442" rx="82" ry="14" fill="#000"/>
  <circle cx="190" cy="350" r="36" fill="none" stroke="#fff" stroke-width="20"/>
  <path d="M215 322L255 282M220 278h45v45" fill="none" stroke="#fff" stroke-width="20"/>
  <circle cx="603" cy="318" r="38" fill="none" stroke="#fff" stroke-width="20"/>
  <path d="M603 355V445M575 405h56" stroke="#fff" stroke-width="20"/>
</svg>

<!--SLIDE-->
</div>
<!-- main vertical scrollbar -->
<div class="a" style="left:998px;top:221px;width:12px;height:302px;background:#dcdcdc"></div><div class="a" style="left:998px;top:221px;width:12px;height:13px;background:#fff"></div><div class="a" style="left:998px;top:523px;width:12px;height:12px;background:#fff"></div>
<div class="a" style="left:1001px;top:225px;width:0;height:0;border-left:3px solid transparent;border-right:3px solid transparent;border-bottom:3px solid #555"></div>
<div class="a" style="left:998px;top:257px;width:12px;height:13px;background:#fff"></div>
<div class="a" style="left:1001px;top:528px;width:0;height:0;border-left:3px solid transparent;border-right:3px solid transparent;border-top:3px solid #555"></div>
<svg class="a" style="left:1000px;top:538px" width="9" height="22" viewBox="0 0 9 22"><path d="M1 4L4.5 1 8 4zM1 8L4.5 5 8 8zM1 15L4.5 18 8 15zM1 18.5L4.5 21.5 8 18.5z" fill="#666"/></svg>

<!-- notes -->
<div class="a" style="left:179px;top:577px;width:832px;height:1px;background:#cfcfcf"></div>
<div class="a" style="left:179px;top:578px;width:832px;height:25px;background:#e6e6e6"></div>
<div class="t" style="left:187px;top:584.5px;font-size:11px;color:#555">Нотатки до слайда</div>
<div class="a" style="left:998px;top:580px;width:12px;height:21px;background:#fff"></div>
<svg class="a" style="left:999px;top:582px" width="9" height="17" viewBox="0 0 9 17"><path d="M1 4L4.5 0.8 8 4M4.5 1v15M1 13l3.5 3.2L8 13" fill="none" stroke="#666" stroke-width="1"/></svg>

<!-- status bar -->
<div class="a" style="left:19px;top:603px;width:992px;height:17px;background:#f3f3f3"></div>
<div class="t" style="left:25px;top:608px;font-size:8px;color:#2a2a2a">Слайд 6 з 60</div>
<svg class="a" style="left:85px;top:605px" width="11" height="12" viewBox="0 0 11 12"><path d="M0.5 1.5h7v10h-7z" fill="none" stroke="#666" stroke-width=".9"/><path d="M4 9l6-7 1 1-6 7z" fill="#666"/></svg>
<div class="t" style="left:109px;top:608px;font-size:8.1px;color:#2a2a2a">українська</div>
<svg class="a" style="left:616px;top:606px" width="10" height="11" viewBox="0 0 10 11"><path d="M3 3L5 1l2 2" fill="none" stroke="#666" stroke-width=".9"/><path d="M0 5.5h10M0 7.75h10M0 10h10" stroke="#666" stroke-width=".9"/></svg>
<div class="t" style="left:629px;top:608px;font-size:8.2px;color:#333">Нотатки</div>
<svg class="a" style="left:673px;top:605px" width="12" height="12" viewBox="0 0 12 12"><path d="M0 0h12v8H5l-3 3v-3H0z" fill="#555"/></svg>
<div class="t" style="left:687px;top:608px;font-size:8.4px;color:#333">Примітки</div>
<div class="a" style="left:736px;top:603px;width:31px;height:17px;background:#c6c6c6"></div>
<svg class="a" style="left:746px;top:606px" width="11" height="10" viewBox="0 0 11 10"><rect x="0.5" y="0.5" width="10" height="9" fill="none" stroke="#666"/><path d="M3 0.5v9" stroke="#666"/><rect x="5" y="2.5" width="3" height="2.5" fill="none" stroke="#666" stroke-width=".8"/></svg>
<svg class="a" style="left:776px;top:606px" width="11" height="10" viewBox="0 0 11 10"><rect x="0.5" y="0.5" width="4" height="3.5" fill="none" stroke="#777"/><rect x="6.5" y="0.5" width="4" height="3.5" fill="none" stroke="#777"/><rect x="0.5" y="6" width="4" height="3.5" fill="none" stroke="#777"/><rect x="6.5" y="6" width="4" height="3.5" fill="none" stroke="#777"/></svg>
<svg class="a" style="left:808px;top:606px" width="11" height="10" viewBox="0 0 11 10"><path d="M0.5 0.5h4.5v9H0.5zM6 0.5h4.5v9H6z M1.5 3h2.5M1.5 5h2.5M7 3h2.5M7 5h2.5" fill="none" stroke="#777" stroke-width=".9"/></svg>
<svg class="a" style="left:840px;top:605px" width="10" height="11" viewBox="0 0 10 11"><path d="M0 0.5h10M1 0.5v6h8v-6M5 6.5v4M3 10.5h4" fill="none" stroke="#777" stroke-width=".9"/><path d="M3 3h4" stroke="#777" stroke-width=".9"/></svg>
<div class="a" style="left:864px;top:611px;width:6px;height:1px;background:#666"></div>
<div class="a" style="left:874px;top:611px;width:77px;height:1px;background:#aaa"></div>
<div class="a" style="left:896px;top:607px;width:4px;height:9px;background:#555"></div>
<div class="a" style="left:955px;top:611px;width:7px;height:1px;background:#666"></div>
<div class="a" style="left:958px;top:608px;width:1px;height:7px;background:#666"></div>
<div class="t" style="left:971px;top:608px;font-size:8px;color:#333">62%</div>
<svg class="a" style="left:998px;top:606px" width="9" height="9" viewBox="0 0 9 9"><rect x="0.5" y="0.5" width="8" height="8" fill="none" stroke="#777" stroke-width=".8"/><path d="M2.5 2.5h4v4h-4z" fill="none" stroke="#777" stroke-width=".7"/></svg>

<!--WINDOW_CONTENT-->

<!-- bottom black -->
<div class="a" style="left:0;top:620px;width:1040px;height:12px;background:#000"></div>
<div class="a" style="left:252px;top:629px;width:22px;height:8px;border-radius:50%;background:#fff"></div>
<div class="a" style="left:338px;top:629px;width:10px;height:6px;border-radius:50%;background:#ddd"></div>
<div class="a" style="left:716px;top:629px;width:6px;height:6px;border-radius:50%;background:#ccc"></div>
<div class="a" style="left:846px;top:629px;width:16px;height:8px;border-radius:50%;background:#fff"></div>
<div class="a" style="left:940px;top:629px;width:22px;height:6px;background:#ddd;border-radius:3px"></div>
<div class="a" style="left:994px;top:629px;width:16px;height:8px;border-radius:50%;background:#fff"></div>
<!--BOTTOM-->
<!-- activation watermark -->
<div class="t" style="left:863px;top:584.5px;font-size:19.8px;color:rgba(148,148,148,.61)">Активація Windows</div>
<div class="t" style="left:863px;top:609px;font-size:15.1px;color:rgba(148,148,148,.61)">Перейдіть до розділу "Настройки"</div>


</body></html>
